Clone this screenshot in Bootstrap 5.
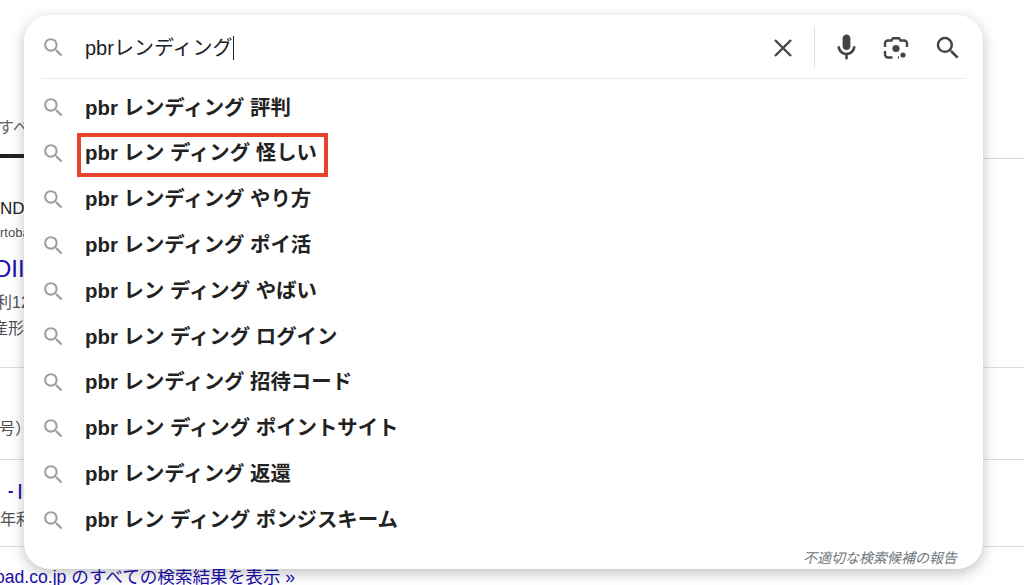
<!doctype html>
<html lang="ja">
<head>
<meta charset="utf-8">
<title>pbrレンディング</title>
<link href="https://cdn.jsdelivr.net/npm/bootstrap@5.3.0/dist/css/bootstrap.min.css" rel="stylesheet">
<style>
html,body{height:585px;overflow:hidden;background:#fff}
body{font-family:"Liberation Sans","Noto Sans CJK JP",sans-serif;color:#202124}
.stage{position:relative;width:1024px;height:585px;overflow:hidden}
.under{height:585px;font-size:16px;color:#4d5156;white-space:nowrap}
.under>*{display:block;line-height:20px}
.tab-txt{padding-top:118px;font-size:16px;color:#5f6368;margin-left:-2px}
.tab-line{display:flex!important;height:5px!important;margin-top:16px}
.tab-line i{width:26px;height:4px;background:#202124}
.tab-line b{flex:1;margin-top:4px;height:1px;background:#dadce0}
.u-nd{margin-top:40px;color:#202124;font-size:17px}
.u-url{margin-top:4px;font-size:13px;color:#4d5156}
.u-big{margin-top:11px;font-size:24px;line-height:30px!important;color:#1a0dab;margin-left:-6px}
.u-a{margin-top:9px;margin-left:-4px}
.u-b{margin-top:6px;margin-left:-8px}
.rule-x{height:1px;background:#dadce0;margin-top:28px}
.u-c{margin-top:51px;margin-left:-1px}
.rule-y{margin-top:20px}
.u-d{margin-top:21px;color:#1a0dab;margin-left:8px;font-weight:700}
.u-e{margin-top:9px}
.rule-z{margin-top:16px}
.u-link{margin-top:20px;color:#1a0dab;font-size:17.6px;margin-left:-5px}
.panel{position:absolute;left:24px;top:15px;width:959px;height:554px;background:#fff;border-radius:26px;box-shadow:0 4px 14px rgba(32,33,36,.28)}
.head{height:64px;margin:0 17px;border-bottom:1px solid #e8eaed;padding-top:2px}
.head-txt{font-size:20px;line-height:24px;margin-left:19px;color:#202124}
.caret{display:inline-block;width:1px;height:24px;background:#202124;vertical-align:-5px}
.ic-s{width:25px;height:25px;fill:#9aa0a6;flex:none}
.tools{margin-left:auto}
.ic-x{width:22px;height:22px;stroke:#444;stroke-width:2.4;fill:none}
.vbar{width:1px;height:41px;background:#dadce0;margin:0 16px 0 20px}
.ic-m{width:31px;height:31px;fill:#444;margin-right:20px}
.ic-l{width:28px;height:28px;margin-right:23px}
.ic-g{width:30px;height:30px;fill:#444;margin-right:3px}
.sug-list{padding-top:6px}
.sug{height:45.8px;padding-left:17px;font-size:20.4px;font-weight:700;color:#222}
.sug-t{margin-left:19px;position:relative}
.mark-box{position:absolute;left:-8px;right:-11px;top:-5px;bottom:-8px;border:4px solid #e5432a}
.report{position:absolute;right:26px;bottom:3px;font-size:14px;line-height:16px;font-style:italic;color:#70757a}
</style>
</head>
<body>
<div class="stage">
  <div class="under">
    <div class="tab-txt">すべて</div>
    <div class="tab-line"><i></i><b></b></div>
    <div class="u-nd">ND</div>
    <div class="u-url">rtobad</div>
    <div class="u-big">DII</div>
    <div class="u-a">利12</div>
    <div class="u-b">産形</div>
    <div class="rule-x"></div>
    <div class="u-c">号）</div>
    <div class="rule-x rule-y"></div>
    <div class="u-d">- |</div>
    <div class="u-e">年利</div>
    <div class="rule-x rule-z"></div>
    <div class="u-link">oad.co.jp のすべての検索結果を表示 »</div>
  </div>

  <div class="panel">
    <div class="head d-flex align-items-center">
      <svg class="ic-s" viewBox="0 0 24 24"><use href="#sr"/></svg>
      <div class="head-txt">pbrレンディング<span class="caret"></span></div>
      <div class="tools d-flex align-items-center">
        <svg class="ic-x" viewBox="0 0 22 22"><path d="M3 3l16 16M19 3L3 19"/></svg>
        <span class="vbar"></span>
        <svg class="ic-m" viewBox="0 0 24 24"><path d="M12 14c1.66 0 3-1.34 3-3V5c0-1.66-1.34-3-3-3S9 3.34 9 5v6c0 1.66 1.34 3 3 3z"/><path d="M17 11c0 2.76-2.24 5-5 5s-5-2.24-5-5H5c0 3.53 2.61 6.43 6 6.92V21h2v-3.08c3.39-.49 6-3.39 6-6.92h-2z"/></svg>
        <svg class="ic-l" viewBox="0 0 28 28"><circle cx="14" cy="14.500" r="3.600" fill="#444"/><circle cx="21" cy="21" r="2.600" fill="#444"/><path d="M3 13V9.500a3 3 0 0 1 3-3h3.500l1.500-2.300h6l1.500 2.300H22a3 3 0 0 1 3 3V13M3 17v3.500a3 3 0 0 0 3 3h4.500M17 23.500h-1" fill="none" stroke="#444" stroke-width="2.400"/></svg>
        <svg class="ic-g" viewBox="0 0 24 24"><use href="#sr"/></svg>
      </div>
    </div>
    <div class="sug-list">
      <div class="sug d-flex align-items-center"><svg class="ic-s" viewBox="0 0 24 24"><use href="#sr"/></svg><span class="sug-t">pbr レンディング 評判</span></div>
      <div class="sug d-flex align-items-center"><svg class="ic-s" viewBox="0 0 24 24"><use href="#sr"/></svg><span class="sug-t">pbr レン ディング 怪しい<span class="mark-box"></span></span></div>
      <div class="sug d-flex align-items-center"><svg class="ic-s" viewBox="0 0 24 24"><use href="#sr"/></svg><span class="sug-t">pbr レンディング やり方</span></div>
      <div class="sug d-flex align-items-center"><svg class="ic-s" viewBox="0 0 24 24"><use href="#sr"/></svg><span class="sug-t">pbr レンディング ポイ活</span></div>
      <div class="sug d-flex align-items-center"><svg class="ic-s" viewBox="0 0 24 24"><use href="#sr"/></svg><span class="sug-t">pbr レン ディング やばい</span></div>
      <div class="sug d-flex align-items-center"><svg class="ic-s" viewBox="0 0 24 24"><use href="#sr"/></svg><span class="sug-t">pbr レン ディング ログイン</span></div>
      <div class="sug d-flex align-items-center"><svg class="ic-s" viewBox="0 0 24 24"><use href="#sr"/></svg><span class="sug-t">pbr レンディング 招待コード</span></div>
      <div class="sug d-flex align-items-center"><svg class="ic-s" viewBox="0 0 24 24"><use href="#sr"/></svg><span class="sug-t">pbr レン ディング ポイントサイト</span></div>
      <div class="sug d-flex align-items-center"><svg class="ic-s" viewBox="0 0 24 24"><use href="#sr"/></svg><span class="sug-t">pbr レンディング 返還</span></div>
      <div class="sug d-flex align-items-center"><svg class="ic-s" viewBox="0 0 24 24"><use href="#sr"/></svg><span class="sug-t">pbr レン ディング ポンジスキーム</span></div>
    </div>
    <div class="report">不適切な検索候補の報告</div>
  </div>
</div>
<svg width="0" height="0" class="d-none"><defs><path id="sr" d="M15.5 14h-.79l-.28-.27A6.471 6.471 0 0 0 16 9.5 6.5 6.5 0 1 0 9.5 16c1.61 0 3.09-.59 4.23-1.57l.27.28v.79l5 4.99L20.49 19l-4.99-5zm-6 0C7.01 14 5 11.99 5 9.5S7.01 5 9.5 5 14 7.01 14 9.5 11.99 14 9.5 14z"/></defs></svg>
<script src="https://cdn.jsdelivr.net/npm/bootstrap@5.3.0/dist/js/bootstrap.bundle.min.js"></script>
</body>
</html>
